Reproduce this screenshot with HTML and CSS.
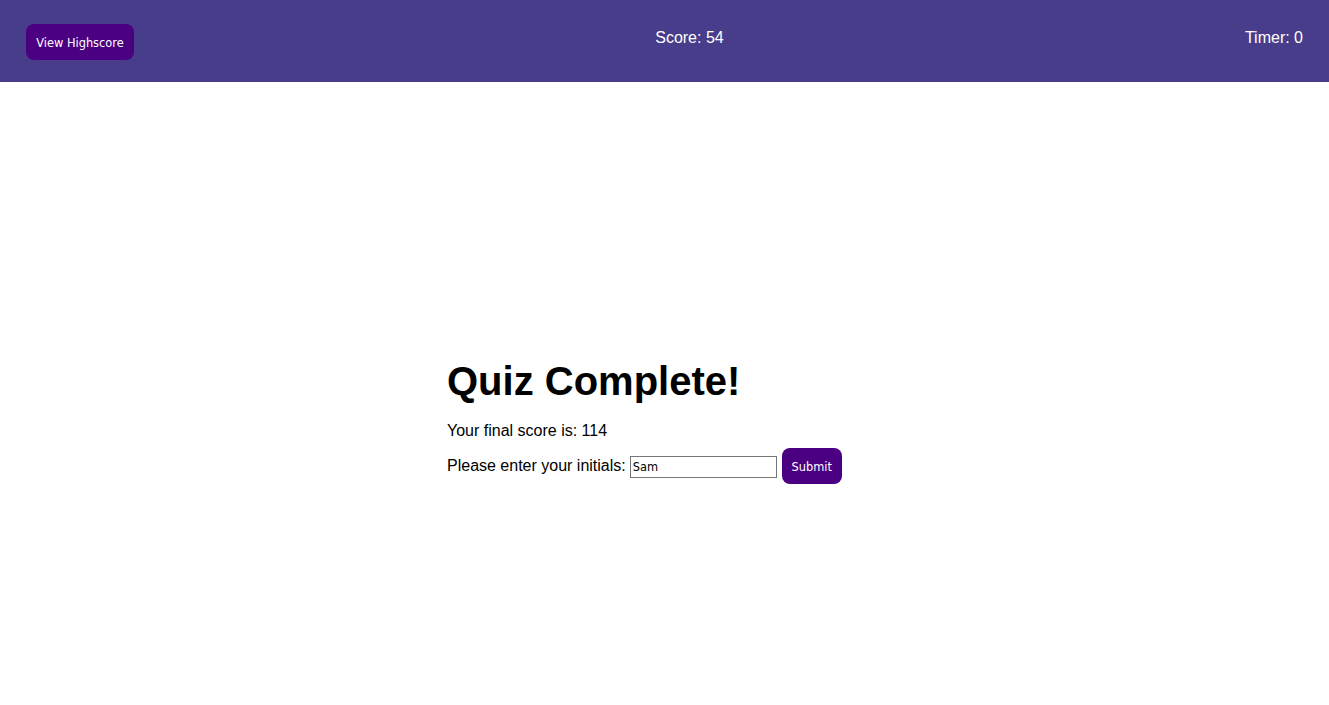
FILE: index.html
```html
<!DOCTYPE html>
<html lang="en">
<head>
<meta charset="utf-8">
<title>Quiz</title>
<link rel="stylesheet" href="styles.css">
</head>
<body>
<header class="topbar">
  <button class="btn btn-highscore">View Highscore</button>
  <div class="stat">Score: 54</div>
  <div class="stat">Timer: 0</div>
</header>
<main class="main">
  <section class="quiz">
    <h1 class="quiz-title">Quiz Complete!</h1>
    <p class="final">Your final score is: 114</p>
    <form class="entry" onsubmit="return false;">
      <label class="entry-label" for="initials">Please enter your initials:</label>
      <input class="entry-input" id="initials" type="text" value="Sam">
      <button class="btn btn-submit" type="submit">Submit</button>
    </form>
  </section>
</main>
</body>
</html>
```
FILE: styles.css
```css
html, body {
  margin: 0;
  padding: 0;
}
body {
  font-family: "Liberation Sans", Arial, sans-serif;
  font-size: 16px;
  color: #000;
  background: #fff;
}
.topbar {
  display: flex;
  justify-content: space-between;
  align-items: flex-start;
  height: 82px;
  box-sizing: border-box;
  padding: 24px 26px 0;
  background: #483d8b;
}
.btn {
  font-family: "DejaVu Sans", Verdana, sans-serif;
  font-size: 11.4px;
  color: #fff;
  background: #4b0082;
  border: none;
  border-radius: 8px;
  height: 36px;
  padding: 2px 0 0;
  cursor: pointer;
}
.btn-highscore {
  width: 108px;
}
.stat {
  color: #fff;
  font-size: 16px;
  line-height: 18px;
  margin-top: 5px;
}
.main {
  padding-top: 276px;
}
.quiz {
  width: 435px;
  margin: 0 auto;
}
.quiz-title {
  margin: 0;
  font-size: 40px;
  line-height: 46px;
  font-weight: bold;
}
.final {
  margin: 18px 0 0;
  line-height: 18px;
}
.entry {
  display: flex;
  align-items: center;
  margin-top: 8px;
  height: 36px;
}
.entry-label {
  line-height: 18px;
}
.entry-input {
  width: 147px;
  height: 22px;
  box-sizing: border-box;
  margin: 1px 0 0 4px;
  padding: 1px 2px;
  border: 1px solid #767676;
  font-family: "DejaVu Sans", Verdana, sans-serif;
  font-size: 11.4px;
  color: #000;
}
.btn-submit {
  width: 60px;
  margin-left: 5px;
}
```
